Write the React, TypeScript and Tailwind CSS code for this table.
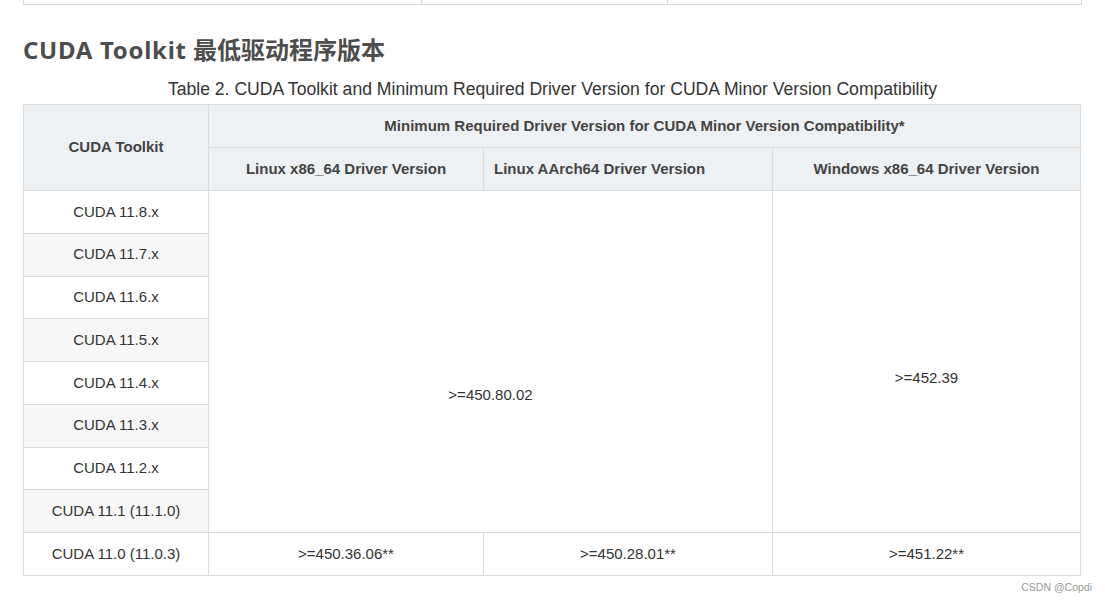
const versions = [
  "CUDA 11.8.x",
  "CUDA 11.7.x",
  "CUDA 11.6.x",
  "CUDA 11.5.x",
  "CUDA 11.4.x",
  "CUDA 11.3.x",
  "CUDA 11.2.x",
  "CUDA 11.1 (11.1.0)",
];

export default function App() {
  return (
    <div className="w-[1105px] h-[600px] bg-white text-[#333] font-['Liberation_Sans',Arial,sans-serif] overflow-hidden">
      <div className="px-[23px]">
        {/* tail of previous table */}
        <div className="flex h-[5px] border-x border-b border-[#dcdcdc]">
          <div className="w-[397px]" />
          <div className="w-[246px] border-l border-[#dcdcdc]" />
          <div className="flex-1 border-l border-[#dcdcdc]" />
        </div>

        <h2 className="mt-[27px] h-[36px] leading-[36px] text-[24px] font-bold text-[#4d4d4d] font-['Noto_Sans','Noto_Sans_CJK_SC',sans-serif]">
          <span className="tracking-[0.7px]">CUDA Toolkit</span> 最低驱动程序版本
        </h2>

        <div className="mt-[8px] h-[26px] leading-[26px] text-center text-[17.6px] text-[#333]">
          Table 2. CUDA Toolkit and Minimum Required Driver Version for CUDA Minor Version Compatibility
        </div>

        <table className="mt-[2px] border-collapse table-fixed w-[1057px] text-[15px]">
          <colgroup>
            <col className="w-[185px]" />
            <col className="w-[275px]" />
            <col className="w-[289px]" />
            <col className="w-[308px]" />
          </colgroup>
          <thead className="bg-[#eef1f4] text-[#444] font-bold">
            <tr className="h-[43px]">
              <th rowSpan={2} className="border border-[#dcdcdc] p-0 align-middle">
                CUDA Toolkit
              </th>
              <th colSpan={3} className="border border-[#dcdcdc] p-0 align-middle pt-[1px]">
                Minimum Required Driver Version for CUDA Minor Version Compatibility*
              </th>
            </tr>
            <tr className="h-[43px]">
              <th className="border border-[#dcdcdc] p-0">Linux x86_64 Driver Version</th>
              <th className="border border-[#dcdcdc] p-0 text-left pl-[10px]">Linux AArch64 Driver Version</th>
              <th className="border border-[#dcdcdc] p-0">Windows x86_64 Driver Version</th>
            </tr>
          </thead>
          <tbody>
            {versions.map((v, i) => (
              <tr key={v} className="h-[42.75px]">
                <td className={`border border-[#dcdcdc] p-0 text-center ${i % 2 === 1 ? "bg-[#f7f7f7]" : "bg-white"}`}>
                  {v}
                </td>
                {i === 0 && (
                  <>
                    <td colSpan={2} rowSpan={8} className="border border-[#dcdcdc] p-0 text-center align-middle pt-[68px]">
                      &gt;=450.80.02
                    </td>
                    <td rowSpan={8} className="border border-[#dcdcdc] p-0 text-center align-middle pt-[34px]">
                      &gt;=452.39
                    </td>
                  </>
                )}
              </tr>
            ))}
            <tr className="h-[42.75px]">
              <td className="border border-[#dcdcdc] p-0 text-center">CUDA 11.0 (11.0.3)</td>
              <td className="border border-[#dcdcdc] p-0 text-center">&gt;=450.36.06**</td>
              <td className="border border-[#dcdcdc] p-0 text-center">&gt;=450.28.01**</td>
              <td className="border border-[#dcdcdc] p-0 text-center">&gt;=451.22**</td>
            </tr>
          </tbody>
        </table>

        <div className="mt-[4px] text-right text-[10.5px] text-[#999] leading-[14px] mr-[-10px]">
          CSDN @Copdi
        </div>
      </div>
    </div>
  );
}
